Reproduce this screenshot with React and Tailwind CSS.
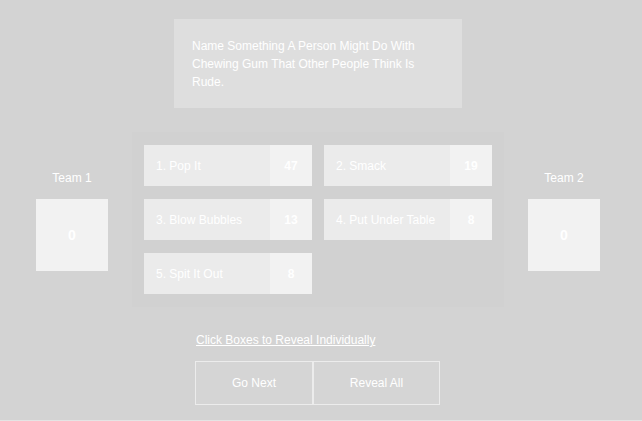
const answers = [
  { n: 1, text: "Pop It", pts: 47 },
  { n: 2, text: "Smack", pts: 19 },
  { n: 3, text: "Blow Bubbles", pts: 13 },
  { n: 4, text: "Put Under Table", pts: 8 },
  { n: 5, text: "Spit It Out", pts: 8 },
];

function TeamScore({ name, score }) {
  return (
    <div className="w-[72px] flex flex-col items-center pt-[39px]">
      <div className="h-[14px] leading-[14px] text-[12px] text-white whitespace-nowrap">{name}</div>
      <div className="mt-[14px] w-[72px] h-[72px] bg-[#f2f2f2] flex items-center justify-center text-[14px] font-bold text-white">
        {score}
      </div>
    </div>
  );
}

export default function App() {
  return (
    <div className="min-h-screen bg-[#e4e4e4]" style={{ fontFamily: '"Liberation Sans", Arial, sans-serif' }}>
      <div className="h-[420px] w-full bg-[#d3d3d3]">
        <div className="w-[564px] ml-[36px] flex flex-col items-center">
          {/* pergunta */}
          <div className="mt-[19px] w-[288px] h-[89px] bg-[#dedede] px-[18px] pt-[18px] text-[12px] leading-[18px] text-white">
            Name Something A Person Might Do With Chewing Gum That Other People Think Is Rude.
          </div>

          {/* tabuleiro */}
          <div className="mt-[24px] w-full flex items-start">
            <TeamScore name="Team 1" score={0} />
            <div className="ml-[24px] w-[372px] bg-[#d1d1d1] px-[12px] py-[13px] grid grid-cols-2 gap-x-[12px] gap-y-[13px]">
              {answers.map((a) => (
                <div key={a.n} className="h-[41px] flex text-white text-[12px]">
                  <div className="flex-1 bg-[#ebebeb] flex items-center pl-[12px] whitespace-nowrap">
                    {a.n}. {a.text}
                  </div>
                  <div className="w-[42px] bg-[#f2f2f2] flex items-center justify-center font-bold">
                    {a.pts}
                  </div>
                </div>
              ))}
            </div>
            <div className="ml-[24px]">
              <TeamScore name="Team 2" score={0} />
            </div>
          </div>

          {/* ações */}
          <div className="mt-[26px] ml-[159px] self-start w-[245px] flex flex-col items-start">
            <a href="#" className="ml-[1px] h-[14px] leading-[14px] text-[12px] text-white underline">
              Click Boxes to Reveal Individually
            </a>
            <div className="mt-[14px] flex">
              <button className="w-[118px] h-[44px] border border-[#ececec] bg-[#d5d5d5] text-[12px] text-white">
                Go Next
              </button>
              <button className="w-[127px] h-[44px] border border-[#ececec] bg-[#d5d5d5] text-[12px] text-white">
                Reveal All
              </button>
            </div>
          </div>
        </div>
      </div>
    </div>
  );
}
